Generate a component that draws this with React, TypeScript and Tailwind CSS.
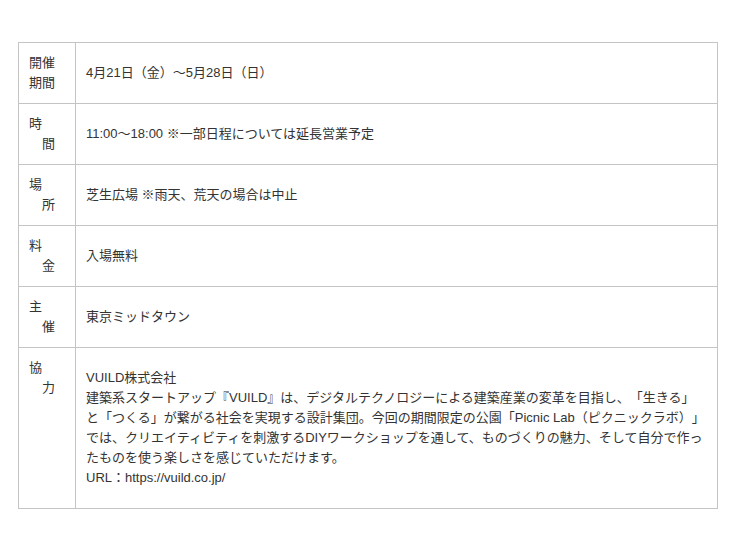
const font = { fontFamily: '"Liberation Sans", "Noto Sans CJK JP", sans-serif' }

interface InfoRow {
  label: [string, string]
  body: string[]
}

const rows: InfoRow[] = [
  { label: ["開催", "期間"], body: ["4月21日（金）〜5月28日（日）"] },
  { label: ["時", "　間"], body: ["11:00〜18:00 ※一部日程については延長営業予定"] },
  { label: ["場", "　所"], body: ["芝生広場 ※雨天、荒天の場合は中止"] },
  { label: ["料", "　金"], body: ["入場無料"] },
  { label: ["主", "　催"], body: ["東京ミッドタウン"] },
  {
    label: ["協", "　力"],
    body: [
      "VUILD株式会社",
      "建築系スタートアップ『VUILD』は、デジタルテクノロジーによる建築産業の変革を目指し、「生きる」",
      "と「つくる」が繋がる社会を実現する設計集団。今回の期間限定の公園「Picnic Lab（ピクニックラボ）」",
      "では、クリエイティビティを刺激するDIYワークショップを通して、ものづくりの魅力、そして自分で作っ",
      "たものを使う楽しさを感じていただけます。",
      "URL：https://vuild.co.jp/",
    ],
  },
]

export default function App() {
  return (
    <div className="min-h-[549px] bg-white pt-[42px] pl-[18px]" style={font}>
      <table className="w-[700px] border-collapse text-[13px] leading-[20px] text-[#333333] [text-spacing-trim:space-all]">
        <tbody>
          {rows.map((row, i) => (
            <tr key={row.label.join("")}>
              <td className="w-[57px] border border-[#c4c4c4] px-[10px] py-[10px] align-top whitespace-pre">
                <div>{row.label[0]}</div>
                <div>{row.label[1]}</div>
              </td>
              <td
                className={
                  i === rows.length - 1
                    ? "border border-[#c4c4c4] px-[10px] py-[20px] align-middle"
                    : "border border-[#c4c4c4] px-[10px] py-[10px] align-middle"
                }
              >
                {row.body.map((line) => (
                  <div key={line} className="whitespace-nowrap">
                    {line}
                  </div>
                ))}
              </td>
            </tr>
          ))}
        </tbody>
      </table>
    </div>
  )
}
